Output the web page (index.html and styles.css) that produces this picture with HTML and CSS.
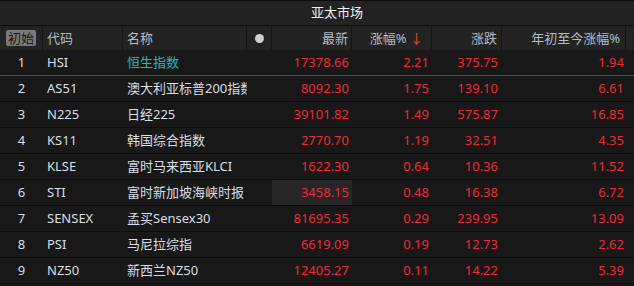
FILE: index.html
```html
<!DOCTYPE html>
<html lang="zh">
<head>
<meta charset="utf-8">
<link rel="stylesheet" href="styles.css">
</head>
<body>
<div class="panel">
  <div class="title">亚太市场</div>
  <div class="grid head">
    <div class="c c0"><span class="tag">初始</span></div>
    <div class="c c1">代码</div>
    <div class="c c2">名称</div>
    <div class="c c3"><span class="dot"></span></div>
    <div class="c cr">最新</div>
    <div class="c cr c5">涨幅% <span class="arrow">↓</span></div>
    <div class="c cr c6">涨跌</div>
    <div class="c cr c7">年初至今涨幅%</div>
    <div class="c c8"></div>
  </div>
  <div class="rows">
    <div class="grid row first"><div class="c c0">1</div><div class="c c1">HSI</div><div class="c c2 cyan">恒生指数</div><div class="c c3"></div><div class="c cr red">17378.66</div><div class="c cr red c5">2.21</div><div class="c cr red c6">375.75</div><div class="c cr red c7">1.94</div><div class="c c8"></div></div>
    <div class="grid row"><div class="c c0">2</div><div class="c c1">AS51</div><div class="c c2">澳大利亚标普200指数</div><div class="c c3"></div><div class="c cr red">8092.30</div><div class="c cr red c5">1.75</div><div class="c cr red c6">139.10</div><div class="c cr red c7">6.61</div><div class="c c8"></div></div>
    <div class="grid row"><div class="c c0">3</div><div class="c c1">N225</div><div class="c c2">日经225</div><div class="c c3"></div><div class="c cr red">39101.82</div><div class="c cr red c5">1.49</div><div class="c cr red c6">575.87</div><div class="c cr red c7">16.85</div><div class="c c8"></div></div>
    <div class="grid row"><div class="c c0">4</div><div class="c c1">KS11</div><div class="c c2">韩国综合指数</div><div class="c c3"></div><div class="c cr red">2770.70</div><div class="c cr red c5">1.19</div><div class="c cr red c6">32.51</div><div class="c cr red c7">4.35</div><div class="c c8"></div></div>
    <div class="grid row"><div class="c c0">5</div><div class="c c1">KLSE</div><div class="c c2">富时马来西亚KLCI</div><div class="c c3"></div><div class="c cr red">1622.30</div><div class="c cr red c5">0.64</div><div class="c cr red c6">10.36</div><div class="c cr red c7">11.52</div><div class="c c8"></div></div>
    <div class="grid row"><div class="c c0">6</div><div class="c c1">STI</div><div class="c c2">富时新加坡海峡时报</div><div class="c c3"></div><div class="c cr red hl">3458.15</div><div class="c cr red c5">0.48</div><div class="c cr red c6">16.38</div><div class="c cr red c7">6.72</div><div class="c c8"></div></div>
    <div class="grid row"><div class="c c0">7</div><div class="c c1">SENSEX</div><div class="c c2">孟买Sensex30</div><div class="c c3"></div><div class="c cr red">81695.35</div><div class="c cr red c5">0.29</div><div class="c cr red c6">239.95</div><div class="c cr red c7">13.09</div><div class="c c8"></div></div>
    <div class="grid row"><div class="c c0">8</div><div class="c c1">PSI</div><div class="c c2">马尼拉综指</div><div class="c c3"></div><div class="c cr red">6619.09</div><div class="c cr red c5">0.19</div><div class="c cr red c6">12.73</div><div class="c cr red c7">2.62</div><div class="c c8"></div></div>
    <div class="grid row"><div class="c c0">9</div><div class="c c1">NZ50</div><div class="c c2">新西兰NZ50</div><div class="c c3"></div><div class="c cr red">12405.27</div><div class="c cr red c5">0.11</div><div class="c cr red c6">14.22</div><div class="c cr red c7">5.39</div><div class="c c8"></div></div>
  </div>
</div>
</body>
</html>
```

FILE: styles.css
```css
* { box-sizing: border-box; }
html, body { margin: 0; padding: 0; background: #181818; }
body {
  width: 634px;
  height: 286px;
  overflow: hidden;
  font-family: "Noto Sans", "Noto Sans CJK SC", sans-serif;
  font-size: 13px;
  color: #d9dfe6;
}
.panel { width: 634px; }
.title {
  height: 26px;
  background: #232323;
  border-top: 1px solid #0c0c0c;
  border-bottom: 1px solid #0c0c0c;
  color: #f2f2f2;
  text-align: center;
  line-height: 23px;
  padding-left: 40px;
}
.grid {
  display: grid;
  grid-template-columns: 43px 80px 124px 25px 80px 80px 70px 124px 8px;
}
.head {
  height: 24px;
  background: #232323;
  color: #b4bcc6;
}
.head .c {
  border-right: 1px solid #161616;
  line-height: 24px;
}
.head .c8 { border-right: none; }
.c {
  white-space: nowrap;
  overflow: hidden;
}
.c0 { text-align: center; }
.c1, .c2 { padding-left: 4px; }
.cr { text-align: right; padding-right: 3px; }
.c5 { padding-right: 3px; }
.head .c5 { padding-right: 8px; }
.c6 { padding-right: 4px; }
.c7 { padding-right: 2px; }
.head .c7 { padding-right: 5px; }
.tag {
  display: inline-block;
  background: #7a7a7a;
  color: #151515;
  border-radius: 2px;
  line-height: 16px;
  padding: 0 2px;
  margin-top: 1px;
}
.c3 { display: flex; align-items: center; justify-content: center; }
.dot {
  width: 9px;
  height: 9px;
  border-radius: 50%;
  background: #cfcfcf;
}
.arrow { color: #ef4b2e; }
.row {
  height: 26px;
  border-bottom: 1px solid #0d0d0d;
  line-height: 25px;
}
.row.first { height: 26px; border-bottom-color: #4e4e4e; }
.cyan { color: #23b8c2; }
.red { color: #ef2b33; }
.hl { background: #262626; }
```
